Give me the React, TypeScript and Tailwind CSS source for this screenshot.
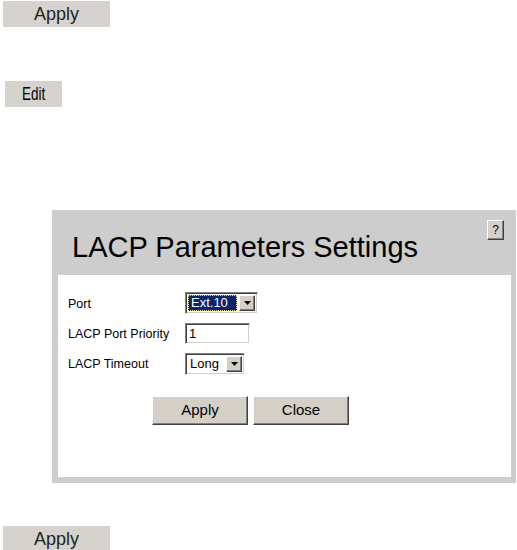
import React from "react";

const font = { fontFamily: '"Liberation Sans", Arial, sans-serif' };

// 3D raised button (classic windows look)
function RaisedButton({ label, className = "" }: { label: string; className?: string }) {
  return (
    <button
      type="button"
      className={`flex items-center justify-center bg-[#d4d0c8] text-black border border-t-white border-l-white border-b-[#404040] border-r-[#404040] shadow-[inset_-1px_-1px_0_#808080] ${className}`}
    >
      {label}
    </button>
  );
}

function Arrow() {
  return (
    <div className="flex h-full w-[16px] items-center justify-center bg-[#d4d0c8] border border-t-white border-l-white border-b-[#404040] border-r-[#404040] shadow-[inset_-1px_-1px_0_#808080]">
      <svg width="7" height="4" viewBox="0 0 7 4">
        <polygon points="0,0 7,0 3.5,4" fill="#000" />
      </svg>
    </div>
  );
}

function Select({ value, width, selected }: { value: string; width: string; selected?: boolean }) {
  return (
    <div
      className={`flex h-[22px] ${width} border border-t-[#808080] border-l-[#808080] border-b-white border-r-white shadow-[inset_1px_1px_0_#404040,inset_-1px_-1px_0_#d4d0c8] bg-white p-[2px]`}
    >
      <div className="flex flex-1 items-center pr-[2px]">
        {selected ? (
          <span className="flex h-full w-full items-center bg-[#0a246a] pl-[3px] text-white outline-1 outline-dotted outline-[#e8e4a0] -outline-offset-1">
            {value}
          </span>
        ) : (
          <span className="pl-[2px]">{value}</span>
        )}
      </div>
      <Arrow />
    </div>
  );
}

export default function App() {
  return (
    <div className="min-h-[550px] bg-white text-black" style={font}>
      <div className="flex flex-col items-start">
        {/* top toolbar buttons */}
        <div className="ml-[3px] mt-[1px] flex h-[26px] w-[107px] items-center justify-center bg-[#d6d3ce] text-[18px] text-[#222]">
          Apply
        </div>
        <div className="ml-[5px] mt-[54px] flex h-[26px] w-[57px] items-center justify-center bg-[#d6d3ce]">
          <span className="inline-block scale-x-75 text-[18px]">Edit</span>
        </div>

        {/* dialog */}
        <div className="ml-[52px] mt-[103px] flex w-[464px] flex-col bg-[#cdcdcd] pb-[6px] pl-[6px] pr-[5px]">
          <div className="relative h-[65px]">
            <h1 className="pl-[14px] pt-[23px] text-[29px] leading-[29px] text-black">
              LACP Parameters Settings
            </h1>
            <RaisedButton label="?" className="absolute right-[7px] top-[10px] h-[20px] w-[17px] text-[12px]" />
          </div>
          <div className="h-[202px] bg-white pl-[10px] pt-[17px] text-[12.5px]">
            <div className="flex flex-col gap-[9px]">
              <div className="flex h-[22px] items-center">
                <span className="w-[117px] pt-[2px]">Port</span>
                <div className="text-[13px]">
                  <Select value="Ext.10" width="w-[73px]" selected />
                </div>
              </div>
              <div className="flex h-[21px] items-center">
                <span className="w-[117px] pt-[2px]">LACP Port Priority</span>
                <div className="flex h-[21px] w-[65px] items-center border border-t-[#808080] border-l-[#808080] border-b-white border-r-white shadow-[inset_1px_1px_0_#404040,inset_-1px_-1px_0_#d4d0c8] bg-white pl-[3px] text-[13px]">
                  1
                </div>
              </div>
              <div className="flex h-[21px] items-center">
                <span className="w-[117px] pt-[2px]">LACP Timeout</span>
                <div className="text-[13px]">
                  <Select value="Long" width="w-[60px]" />
                </div>
              </div>
            </div>
            <div className="ml-[84px] mt-[22px] flex gap-[5px] text-[15px]">
              <RaisedButton label="Apply" className="h-[29px] w-[96px]" />
              <RaisedButton label="Close" className="h-[29px] w-[96px]" />
            </div>
          </div>
        </div>

        <div className="ml-[3px] mt-[43px] flex h-[26px] w-[107px] items-center justify-center bg-[#d6d3ce] text-[18px] text-[#222]">
          Apply
        </div>
      </div>
    </div>
  );
}
